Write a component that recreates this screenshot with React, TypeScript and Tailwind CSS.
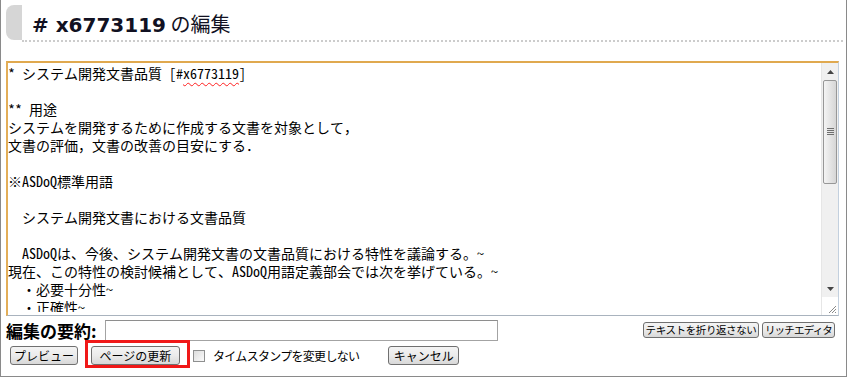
import React from "react";

const ui = { fontFamily: '"Noto Sans CJK JP", "Noto Sans", sans-serif' };
const mono = {
  fontFamily: '"Noto Sans Mono CJK JP", "Noto Sans CJK JP", "DejaVu Sans Mono", monospace',
};

function Btn({ children, className = "" }: { children: React.ReactNode; className?: string }) {
  return (
    <button
      className={
        "flex items-center justify-center whitespace-nowrap overflow-hidden rounded-[3px] border border-[#707070] bg-gradient-to-b from-[#f4f4f4] via-[#ebebeb] to-[#d8d8d8] text-black leading-none " +
        className
      }
      style={ui}
    >
      {children}
    </button>
  );
}

const lines: React.ReactNode[] = [
  <>
    {"* システム開発文書品質 [#"}
    <span className="underline decoration-wavy decoration-[#ff2020] decoration-1 underline-offset-[3px]">x6773119</span>
    {"]"}
  </>,
  "",
  "** 用途",
  "システムを開発するために作成する文書を対象として，",
  "文書の評価，文書の改善の目安にする．",
  "",
  "※ASDoQ標準用語",
  "",
  "  システム開発文書における文書品質",
  "",
  "  ASDoQは、今後、システム開発文書の文書品質における特性を議論する。~",
  "現在、この特性の検討候補として、ASDoQ用語定義部会では次を挙げている。~",
  "  ・必要十分性~",
  "  ・正確性~",
];

export default function App() {
  return (
    <div className="w-[847px] h-[377px] border-l border-r border-b border-[#8a8a8a] bg-white overflow-hidden" style={ui}>
      <div className="pl-[5px] pt-[5px]">
        {/* Header */}
        <div className="flex pr-[3px]">
          <div className="w-[16px] h-[35px] rounded-l-[8px] bg-[#d6d6d6]" />
          <div className="flex-1 h-[37px] border-b-2 border-dotted border-[#cccccc] pl-[10px] pt-[4px] flex items-center">
            <h1 className="text-[20px] leading-none text-[#111122] whitespace-pre">
              <span className="font-bold" style={{ fontFamily: '"DejaVu Sans", Verdana, sans-serif' }}>
                # x6773119
              </span>
              <span style={ui}> の編集</span>
            </h1>
          </div>
        </div>

        {/* Textarea */}
        <div className="mt-[19px] w-[833px] h-[255px] flex border-t-2 border-l-2 border-t-[#e0a94f] border-l-[#e3ae58] border-r border-b border-r-[#c3d0de] border-b-[#a9b3be] bg-white">
          <div className="flex-1 self-start h-[249px] overflow-hidden pt-[1px] text-[14px] leading-[18px] text-black" style={mono}>
            {lines.map((l, i) => (
              <div key={i} className="h-[18px] whitespace-pre">
                {l}
              </div>
            ))}
          </div>
          {/* Scrollbar */}
          <div className="w-[17px] flex flex-col bg-[#f0f0f0] border-l border-[#e6e6e6]">
            <div className="h-[17px] flex items-center justify-center">
              <svg width="7" height="4" viewBox="0 0 7 4">
                <path d="M0 4 L3.5 0 L7 4 Z" fill="#444" />
              </svg>
            </div>
            <div className="mx-[1px] h-[104px] rounded-[2px] border border-[#979797] bg-gradient-to-r from-[#f4f4f4] to-[#d6d6d6] flex items-center justify-center">
              <svg width="7" height="8" viewBox="0 0 7 8">
                <path d="M0 0.5 H7 M0 2.5 H7 M0 4.5 H7 M0 6.5 H7" stroke="#6f6f6f" strokeWidth="1" />
              </svg>
            </div>
            <div className="flex-1" />
            <div className="h-[17px] flex items-center justify-center">
              <svg width="7" height="4" viewBox="0 0 7 4">
                <path d="M0 0 L3.5 4 L7 0 Z" fill="#444" />
              </svg>
            </div>
            <div className="h-[18px] bg-white relative">
              <svg className="absolute right-[1px] bottom-[1px]" width="10" height="10" viewBox="0 0 10 10">
                <path d="M9 2 L2 9 M9 5 L5 9 M9 8 L8 9" stroke="#8a8a8a" strokeWidth="1" />
              </svg>
            </div>
          </div>
        </div>

        {/* Summary row */}
        <div className="mt-[4px] h-[20px] flex items-start">
          <div className="w-[99px] h-[21px] flex items-center text-[17px] font-bold leading-none text-black whitespace-nowrap" style={ui}>
            編集の要約:
          </div>
          <div className="w-[393px] h-[21px] border border-[#a3a3a3] border-t-[#8e8e8e] bg-white" />
          <div className="ml-auto mr-[11px] mt-[2px] flex gap-[3px]">
            <Btn className="w-[116px] h-[16px] text-[10.5px] tracking-[-0.4px]">テキストを折り返さない</Btn>
            <Btn className="w-[73px] h-[16px] text-[10.5px] tracking-[-0.8px]">リッチエディタ</Btn>
          </div>
        </div>

        {/* Action row */}
        <div className="h-[28px] flex items-center">
          <Btn className="ml-[4px] w-[68px] h-[19px] text-[12px] mt-[3px]">プレビュー</Btn>
          <div className="ml-[7px] w-[105px] h-[28px] border-[3px] border-[#f01818] flex items-center pl-[3px] pt-[3px]">
            <Btn className="w-[89px] h-[19px] text-[12px]">ページの更新</Btn>
          </div>
          <div className="ml-[3px] mt-[3px] w-[12px] h-[12px] border border-[#8e8f8f] bg-gradient-to-br from-[#dcdcdc] to-[#fafafa]" />
          <span className="ml-[8px] mt-[3px] text-[12px] tracking-[-0.7px] leading-none text-black whitespace-nowrap" style={ui}>
            タイムスタンプを変更しない
          </span>
          <Btn className="ml-[29px] mt-[3px] w-[71px] h-[19px] text-[12px]">キャンセル</Btn>
        </div>
      </div>
    </div>
  );
}
